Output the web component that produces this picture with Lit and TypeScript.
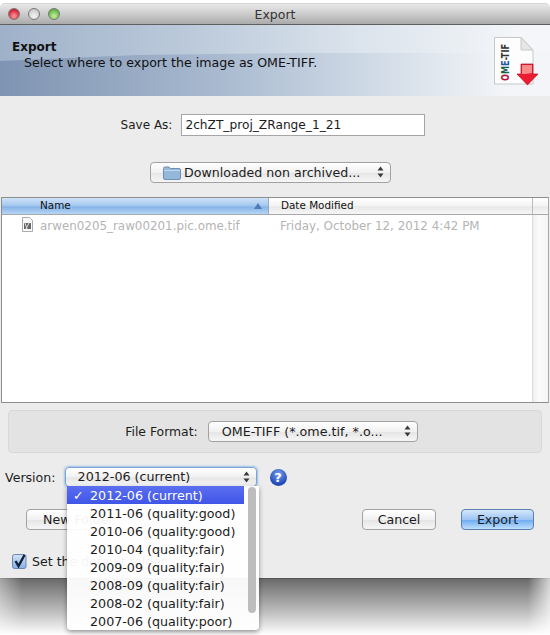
import { LitElement, html, css, svg } from 'lit';
import { customElement } from 'lit/decorators.js';

const VERSIONS = [
  '2011-06 (quality:good)',
  '2010-06 (quality:good)',
  '2010-04 (quality:fair)',
  '2009-09 (quality:fair)',
  '2008-09 (quality:fair)',
  '2008-02 (quality:fair)',
  '2007-06 (quality:poor)',
];

const stepper = svg`<svg class="stepper" width="7" height="12" viewBox="0 0 7 12"><path d="M3.5 0.5 6.5 4.5H0.5ZM3.5 11.5 0.5 7.5H6.5Z" fill="#3a3a3a"/></svg>`;

@customElement('app-root')
export class AppRoot extends LitElement {
  static styles = css`
    :host {
      display: block;
      position: relative;
      width: 550px;
      height: 635px;
      overflow: hidden;
      background: #fff;
      font-family: "DejaVu Sans", sans-serif;
      font-size: 12.6px;
      color: #1c1c1c;
    }

    .window {
      padding-top: 3px;
    }

    .titlebar {
      height: 22px;
      box-sizing: border-box;
      display: flex;
      align-items: center;
      justify-content: center;
      position: relative;
      background: linear-gradient(#e9e9e9, #c9c9c9 55%, #aaa);
      border-top: 1px solid #d5d5d5;
      border-bottom: 1px solid #5f5f5f;
      border-radius: 5px 5px 0 0;
      color: #333;
      font-size: 12.5px;
    }

    .lights {
      position: absolute;
      left: 8px;
      top: 4px;
      display: flex;
      gap: 8px;
    }

    .light {
      width: 12px;
      height: 12px;
      border-radius: 50%;
      border: 0.5px solid #777;
      box-sizing: border-box;
    }
    .light.red { background: radial-gradient(circle at 50% 70%, #ffa0a0, #d8283a 65%, #a81a2a); }
    .light.off { background: radial-gradient(circle at 50% 70%, #f4f4f4, #cfcfcf 70%, #a8a8a8); }
    .light.green { background: radial-gradient(circle at 50% 70%, #c8f0a0, #6cba4a 65%, #3f8a2c); }

    .banner {
      height: 71px;
      position: relative;
      overflow: hidden;
      background: linear-gradient(90deg, #9fb1c9, #bccadb 35%, #dbe3ec 65%, #f4f6f9 95%);
    }

    .banner::before {
      content: "";
      position: absolute;
      inset: 28px 0 0 0;
      background: linear-gradient(90deg, #7f94b2, #a9bad0 40%, #d3dde8 70%, #f3f5f8 92%);
      clip-path: polygon(0 8px, 25% 2px, 55% 0, 100% 0, 100% 100%, 0 100%);
    }

    .banner-text {
      position: relative;
      padding: 14px 0 0 12px;
      line-height: 16px;
      color: #111;
    }

    .banner-text b {
      display: block;
      font-size: 12px;
      font-weight: 700;
    }

    .banner-text span {
      display: block;
      padding-left: 12px;
    }

    .doc-icon {
      position: absolute;
      right: 11px;
      top: 12px;
    }

    .content {
      height: 482px;
      background: #ececec;
      display: flex;
      flex-direction: column;
    }

    .row {
      display: flex;
      align-items: center;
      justify-content: center;
    }

    .save-row {
      margin-top: 18px;
      height: 22px;
      gap: 9px;
      padding-right: 4px;
      font-size: 12px;
    }

    .name-input {
      width: 244px;
      height: 22px;
      box-sizing: border-box;
      border: 1px solid #a5a5a5;
      background: #fff;
      padding-left: 3px;
      line-height: 20px;
      font-size: 12.2px;
    }

    .location-row {
      margin-top: 26px;
      padding-right: 9px;
    }

    .popup {
      height: 21px;
      box-sizing: border-box;
      border: 1px solid #a2a2a2;
      border-radius: 4px;
      background: linear-gradient(#ffffff, #f1f1f1 50%, #e6e6e6 55%, #f6f6f6);
      display: flex;
      align-items: center;
      position: relative;
    }

    .stepper {
      position: absolute;
      right: 6px;
      top: 3px;
    }

    .location {
      width: 241px;
      padding-left: 12px;
      gap: 3px;
    }

    .list {
      margin-top: 14px;
      margin-left: 1px;
      width: 548px;
      height: 206px;
      box-sizing: border-box;
      border: 1px solid #8e8e8e;
      border-right-color: #aaa;
      background: #fff;
      display: flex;
      flex-direction: column;
    }

    .list-head {
      height: 17px;
      box-sizing: border-box;
      display: flex;
      border-bottom: 1px solid #a8a8a8;
      font-size: 10.4px;
      line-height: 15px;
      color: #111;
    }

    .col-name {
      width: 267px;
      box-sizing: border-box;
      padding-left: 38px;
      position: relative;
      background: linear-gradient(#cfe2f7, #a2c6ef 50%, #85b2e6 55%, #b6d6f7);
      border-right: 1px solid #9ab;
    }

    .sort-arrow {
      position: absolute;
      right: 6px;
      top: 5px;
      width: 0;
      height: 0;
      border: 4px solid transparent;
      border-top: 0;
      border-bottom: 6px solid #4d7cb8;
    }

    .col-date {
      flex: 1;
      padding-left: 12px;
      background: linear-gradient(#fff, #f3f3f3 50%, #e8e8e8 55%, #f6f6f6);
      border-right: 1px solid #bbb;
    }

    .col-rest {
      width: 15px;
      background: linear-gradient(#fff, #f3f3f3 50%, #e8e8e8 55%, #f6f6f6);
    }

    .list-body {
      flex: 1;
      display: flex;
    }

    .rows {
      flex: 1;
    }

    .list-track {
      width: 15px;
      border-left: 1px solid #dcdcdc;
      background: linear-gradient(90deg, #efefef, #fbfbfb 40%, #f4f4f4);
    }

    .list-row {
      display: flex;
      height: 19px;
      padding-top: 2px;
      line-height: 19px;
      color: #b4b4b4;
      font-size: 11.9px;
    }

    .file-name {
      width: 267px;
      display: flex;
      align-items: flex-start;
      padding-left: 20px;
      gap: 7px;
      box-sizing: border-box;
    }

    .file-date {
      padding-left: 11px;
    }

    .format-box {
      margin: 7px 8px 0 8px;
      height: 43px;
      box-sizing: border-box;
      border: 1px solid #d8d8d8;
      border-radius: 4px;
      background: #e3e3e3;
      gap: 10px;
      padding-right: 7px;
      font-size: 12.4px;
    }

    .format {
      width: 210px;
      padding-left: 13px;
      font-size: 12.7px;
    }

    .version-row {
      margin-top: 14px;
      height: 20px;
      display: flex;
      align-items: center;
      padding-left: 5px;
    }

    .version {
      margin-left: 9px;
      width: 192px;
      height: 20px;
      padding: 0 0 1px 12px;
      border: 1px solid #7ba3d6;
      box-shadow: 0 0 2px 1px #9dbfe8;
      font-size: 12.7px;
    }

    .help {
      margin-left: 13px;
      width: 17px;
      height: 17px;
      border-radius: 50%;
      background: radial-gradient(circle at 50% 30%, #7ba0ee, #1f48b8 70%, #163490);
      color: #fff;
      font-weight: 700;
      font-size: 13px;
      line-height: 17px;
      text-align: center;
    }

    .buttons-row {
      margin-top: 22px;
      display: flex;
      padding: 0 16px 0 26px;
      align-items: center;
    }

    .btn {
      height: 21px;
      box-sizing: border-box;
      border: 1px solid #a2a2a2;
      border-radius: 4px;
      background: linear-gradient(#ffffff, #f1f1f1 50%, #e6e6e6 55%, #f6f6f6);
      text-align: center;
      line-height: 19px;
    }

    .new-btn {
      width: 110px;
      text-align: left;
      padding-left: 16px;
      margin-right: auto;
    }

    .cancel {
      width: 74px;
      margin-right: 25px;
    }

    .export {
      width: 73px;
      border-color: #5d7fae;
      background: linear-gradient(#d6e7fb, #9cc5f3 50%, #72aef0 55%, #bfe0fd);
    }

    .check-row {
      margin-top: 24px;
      display: flex;
      align-items: center;
      padding-left: 12px;
      gap: 5px;
    }

    .check {
      display: block;
      overflow: visible;
    }

    .shadow {
      height: 57px;
      background: linear-gradient(#6a6a6a, #8f8f8f 25%, #c0c0c0 60%, #f0f0f0 90%, #fff);
      -webkit-mask-image: linear-gradient(90deg, rgba(0, 0, 0, 0.6), #000 4%, #000 96%, rgba(0, 0, 0, 0.3));
      mask-image: linear-gradient(90deg, rgba(0, 0, 0, 0.6), #000 4%, #000 96%, rgba(0, 0, 0, 0.3));
      border-top: 1px solid #555;
      box-sizing: border-box;
    }

    .menu {
      position: absolute;
      left: 67px;
      top: 486px;
      width: 192px;
      height: 144px;
      background: rgba(255, 255, 255, 0.95);
      box-shadow: 0 2px 5px rgba(0, 0, 0, 0.4);
      border-radius: 0 0 4px 4px;
      overflow: hidden;
      font-size: 12.7px;
    }

    .menu-item {
      height: 18px;
      line-height: 20px;
      padding-left: 23px;
      width: 177px;
      box-sizing: border-box;
      position: relative;
    }

    .menu-item.selected {
      color: #fff;
      background: linear-gradient(#5b6ff0, #3f55e8);
    }

    .tick {
      position: absolute;
      left: 6px;
    }

    .scroll-thumb {
      position: absolute;
      left: 181px;
      top: 1px;
      width: 8px;
      height: 126px;
      border-radius: 4px;
      background: #bdbdbd;
    }
  `;

  private renderDocIcon() {
    return html`<svg class="doc-icon" width="45" height="50" viewBox="0 0 45 50">
      <path d="M0.5 0.5H27L39 13V47H0.5Z" fill="#fdfdfd" stroke="#c8c8c8"/>
      <path d="M27 0.5V13H39Z" fill="#e6e6e6" stroke="#c8c8c8"/>
      <text transform="translate(14.7 44) rotate(-90)" font-size="10.5" font-weight="700" font-family="DejaVu Sans" textLength="37" lengthAdjust="spacingAndGlyphs"><tspan fill="#b5123a">O</tspan><tspan fill="#17604a">M</tspan><tspan fill="#2357a8">E</tspan><tspan fill="#333">-TIF</tspan></text>
      <path d="M27 27H39V37H44L33.5 48 23 37H27Z" fill="#ee1c33" stroke="#b0101f" stroke-width="0.7"/>
      <path d="M28 28H38V36L31 37H28Z" fill="#f98a8a"/>
    </svg>`;
  }

  private renderFileIcon() {
    return html`<svg width="11" height="15" viewBox="0 0 11 15">
      <path d="M0.5 0.5H7.5L10.5 3.5V14.5H0.5Z" fill="#fafafa" stroke="#aaa"/>
      <rect x="2" y="6" width="7" height="6" fill="#666"/>
      <path d="M3 6 5 12M7 6 4 12" stroke="#ddd"/>
    </svg>`;
  }

  private renderFolder() {
    return html`<svg width="18" height="14" viewBox="0 0 18 14">
      <path d="M0.5 2.5Q0.5 1 2 1H6L7.5 2.5H16Q17.5 2.5 17.5 4V12Q17.5 13.5 16 13.5H2Q0.5 13.5 0.5 12Z" fill="#94b8d9" stroke="#6f8fb0"/>
      <path d="M1 4.5H17" stroke="#c4d8ea"/>
    </svg>`;
  }

  private renderCheck() {
    return html`<svg class="check" width="15" height="15" viewBox="0 0 15 15">
      <defs>
        <linearGradient id="chk" x1="0" y1="0" x2="0" y2="1">
          <stop offset="0" stop-color="#d3e3f6"/>
          <stop offset="1" stop-color="#88b0e4"/>
        </linearGradient>
      </defs>
      <rect x="0.5" y="0.5" width="13.5" height="14" rx="2" fill="url(#chk)" stroke="#6b87ad"/>
      <path d="M3.5 7 6.5 12 12.5 1" fill="none" stroke="#14233c" stroke-width="2.4"/>
    </svg>`;
  }

  render() {
    return html`
      <div class="window">
        <div class="titlebar">
          <div class="lights">
            <span class="light red"></span><span class="light off"></span><span class="light green"></span>
          </div>
          Export
        </div>
        <div class="banner">
          <div class="banner-text">
            <b>Export</b>
            <span>Select where to export the image as OME-TIFF.</span>
          </div>
          ${this.renderDocIcon()}
        </div>
        <div class="content">
          <div class="row save-row">
            <span>Save As:</span>
            <div class="name-input">2chZT_proj_ZRange_1_21</div>
          </div>
          <div class="row location-row">
            <div class="popup location">
              ${this.renderFolder()}<span>Downloaded non archived...</span>${stepper}
            </div>
          </div>
          <div class="list">
            <div class="list-head">
              <div class="col-name">Name<span class="sort-arrow"></span></div>
              <div class="col-date">Date Modified</div>
              <div class="col-rest"></div>
            </div>
            <div class="list-body">
              <div class="rows">
                <div class="list-row">
                  <div class="file-name">${this.renderFileIcon()}<span>arwen0205_raw00201.pic.ome.tif</span></div>
                  <div class="file-date">Friday, October 12, 2012 4:42 PM</div>
                </div>
              </div>
              <div class="list-track"></div>
            </div>
          </div>
          <div class="row format-box">
            <span>File Format:</span>
            <div class="popup format">OME-TIFF (*.ome.tif, *.o...${stepper}</div>
          </div>
          <div class="version-row">
            <span>Version:</span>
            <div class="popup version">2012-06 (current)${stepper}</div>
            <div class="help">?</div>
          </div>
          <div class="buttons-row">
            <div class="btn new-btn">New Folder</div>
            <div class="btn cancel">Cancel</div>
            <div class="btn export">Export</div>
          </div>
          <div class="check-row">
            ${this.renderCheck()}
            <span>Set the default folder</span>
          </div>
        </div>
        <div class="shadow"></div>
      </div>
      <div class="menu">
        <div class="menu-item selected"><span class="tick">✓</span>2012-06 (current)</div>
        ${VERSIONS.map((v) => html`<div class="menu-item">${v}</div>`)}
        <div class="scroll-thumb"></div>
      </div>
    `;
  }
}

declare global {
  interface HTMLElementTagNameMap { 'app-root': AppRoot; }
}
